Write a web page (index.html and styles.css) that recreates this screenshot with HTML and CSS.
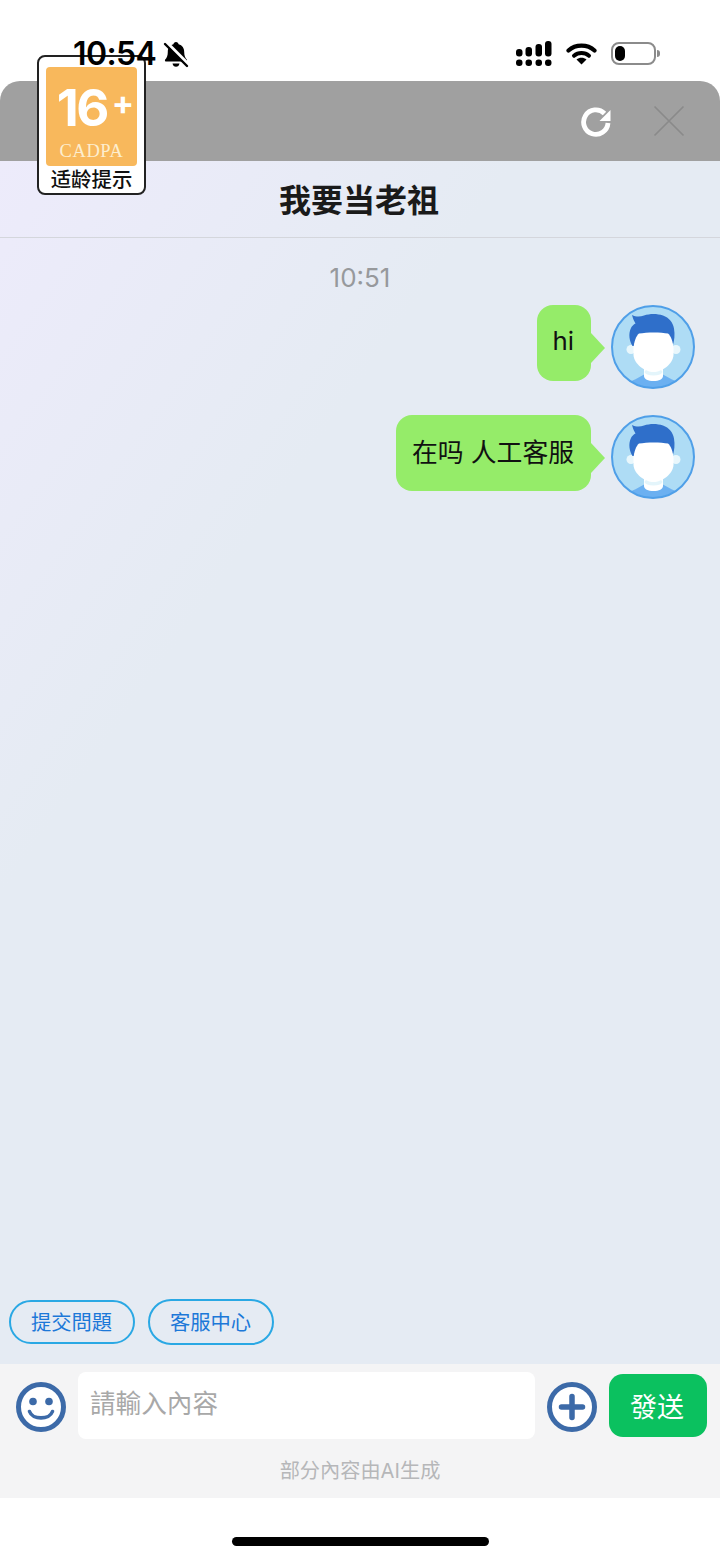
FILE: index.html
```html
<!DOCTYPE html>
<html lang="zh">
<head>
<meta charset="utf-8">
<title>我要当老祖</title>
<link rel="stylesheet" href="styles.css">
</head>
<body>
<div class="page">
  <div class="status">
    <div class="status-left">
      <span class="clock">10:54</span>
      <svg class="bell" viewBox="0 0 26 27" width="26" height="27">
        <path d="M13 1c1.500 0 2.400 1 2.600 2.300 3.800 1 5.600 4 5.600 7.700 0 4 1 5.800 2.600 7.500.7.800.2 2.100-1 2.100H3.200c-1.200 0-1.700-1.300-1-2.100 1.600-1.700 2.600-3.500 2.600-7.500 0-3.700 1.800-6.700 5.600-7.700C10.600 2 11.500 1 13 1z" fill="#000"/>
        <path d="M9.500 22.500h7c-.3 2-1.700 3.300-3.500 3.300s-3.200-1.300-3.500-3.300z" fill="#000"/>
        <path d="M3.500 1.500l22 22" stroke="#fff" stroke-width="3.600"/>
        <path d="M2 3l22 22" stroke="#000" stroke-width="2.400" stroke-linecap="round"/>
      </svg>
    </div>
    <div class="status-right">
      <svg viewBox="0 0 37 27" width="37" height="27" fill="#000">
        <rect x="1" y="9" width="6.500" height="7.500" rx="3"/>
        <rect x="10.500" y="7" width="6.500" height="9.500" rx="3"/>
        <rect x="20.500" y="4" width="6.500" height="12.500" rx="3"/>
        <rect x="30" y="1" width="6.500" height="15.500" rx="3"/>
        <rect x="1" y="19.500" width="6.500" height="6.500" rx="3"/>
        <rect x="10.500" y="19.500" width="6.500" height="6.500" rx="3"/>
        <rect x="20.500" y="19.500" width="6.500" height="6.500" rx="3"/>
        <rect x="30" y="19.500" width="6.500" height="6.500" rx="3"/>
      </svg>
      <svg class="wifi" viewBox="0 0 31 23" width="31" height="23">
        <path d="M2.500 8.500C9.500 2 21.500 2 28.500 8.500" fill="none" stroke="#000" stroke-width="4.200" stroke-linecap="round"/>
        <path d="M8 13.800C12.200 10.200 18.800 10.200 23 13.800" fill="none" stroke="#000" stroke-width="4" stroke-linecap="round"/>
        <path d="M10.500 17.400c2.800-2.300 7.200-2.300 10 0L15.500 22.500z" fill="#000"/>
      </svg>
      <div class="battery"><span class="battery-level"></span></div>
    </div>
  </div>

  <div class="sheet">
    <div class="topbar">
      <svg class="refresh" viewBox="0 0 32 32" width="32" height="32">
        <path d="M24.500 8.500A12.200 12.200 0 1 0 28 18" fill="none" stroke="#fff" stroke-width="4.800"/>
        <path d="M30.500 5v11H19.500z" fill="#fff"/>
      </svg>
      <svg class="close" viewBox="0 0 32 32" width="32" height="32">
        <path d="M1.500 1.500l29 29M30.500 1.500l-29 29" stroke="#8a8a8a" stroke-width="1.700" fill="none"/>
      </svg>
    </div>

    <div class="chat">
      <div class="chat-title">我要当老祖</div>
      <div class="messages">
        <div class="time">10:51</div>
        <div class="msg">
          <div class="bubble">hi</div>
          <svg class="avatar" viewBox="0 0 84 84" width="84" height="84">
            <defs><clipPath id="ac1"><circle cx="42" cy="42" r="40.500"/></clipPath></defs>
            <circle cx="42" cy="42" r="41" fill="#aedcf5"/>
            <path clip-path="url(#ac1)" d="M16 84c0-5 4-8 8-9.500l10-5.500h17l10 5.500c4 1.500 8 4.500 8 9.500z" fill="#6bb0f1"/>
            <path d="M33 56h19v15c0 3-4 5-9.500 5S33 74 33 71z" fill="#fff"/>
            <ellipse cx="42.500" cy="67" rx="9" ry="3.500" fill="#e4f5fb"/>
            <circle cx="20" cy="44.500" r="4.500" fill="#e9f7fc"/>
            <circle cx="65" cy="44.500" r="4.500" fill="#e9f7fc"/>
            <path d="M21.500 41c-3-5-4.500-12-1.500-18 1-2 2.500-3.500 4.500-4.500-1.500-2.500-2.500-5-3.500-8.500 4 2 8 2 12 .5 6-2 13-2 19 0 6 2 10 7 11 13 1 6 .5 12-1.500 18z" fill="#2f6fca"/>
            <path d="M22.500 43C23 37 25 31 28 28.500 36 27 50 27 57 28.500 60 31 62 37 62.500 43v7C62 59 51 67 42.500 67S23 59 22.500 50z" fill="#fff"/>
            <circle cx="42" cy="42" r="41" fill="none" stroke="#4f9fe8" stroke-width="2"/>
          </svg>
        </div>
        <div class="msg">
          <div class="bubble">在吗 人工客服</div>
          <svg class="avatar" viewBox="0 0 84 84" width="84" height="84">
            <defs><clipPath id="ac2"><circle cx="42" cy="42" r="40.500"/></clipPath></defs>
            <circle cx="42" cy="42" r="41" fill="#aedcf5"/>
            <path clip-path="url(#ac2)" d="M16 84c0-5 4-8 8-9.500l10-5.500h17l10 5.500c4 1.500 8 4.500 8 9.500z" fill="#6bb0f1"/>
            <path d="M33 56h19v15c0 3-4 5-9.500 5S33 74 33 71z" fill="#fff"/>
            <ellipse cx="42.500" cy="67" rx="9" ry="3.500" fill="#e4f5fb"/>
            <circle cx="20" cy="44.500" r="4.500" fill="#e9f7fc"/>
            <circle cx="65" cy="44.500" r="4.500" fill="#e9f7fc"/>
            <path d="M21.500 41c-3-5-4.500-12-1.500-18 1-2 2.500-3.500 4.500-4.500-1.500-2.500-2.500-5-3.500-8.500 4 2 8 2 12 .5 6-2 13-2 19 0 6 2 10 7 11 13 1 6 .5 12-1.500 18z" fill="#2f6fca"/>
            <path d="M22.500 43C23 37 25 31 28 28.500 36 27 50 27 57 28.500 60 31 62 37 62.500 43v7C62 59 51 67 42.500 67S23 59 22.500 50z" fill="#fff"/>
            <circle cx="42" cy="42" r="41" fill="none" stroke="#4f9fe8" stroke-width="2"/>
          </svg>
        </div>
      </div>
      <div class="chips">
        <div class="chip">提交問題</div>
        <div class="chip chip-tall">客服中心</div>
      </div>
    </div>

    <div class="composer">
      <div class="composer-row">
        <svg viewBox="0 0 50 50" width="50" height="50">
          <circle cx="25" cy="25" r="22.500" fill="#fff" stroke="#3c6aa8" stroke-width="5"/>
          <circle cx="17" cy="19.500" r="3.800" fill="#3c6aa8"/>
          <circle cx="33" cy="19.500" r="3.800" fill="#3c6aa8"/>
          <path d="M13.500 29.500c3 8.500 20 8.500 23 0" fill="none" stroke="#3c6aa8" stroke-width="3.600" stroke-linecap="round"/>
        </svg>
        <div class="input">請輸入內容</div>
        <svg viewBox="0 0 50 50" width="50" height="50">
          <circle cx="25" cy="25" r="22.500" fill="#fff" stroke="#3c6aa8" stroke-width="5"/>
          <path d="M14.500 25h21M25 14.500v21" stroke="#3c6aa8" stroke-width="5.500" stroke-linecap="round"/>
        </svg>
        <div class="send">發送</div>
      </div>
      <div class="note">部分內容由AI生成</div>
    </div>
  </div>

  <div class="home"><span class="home-bar"></span></div>

  <div class="age">
    <div class="age-box">
      <div class="age-num"><span>16</span><span class="age-plus">+</span></div>
      <div class="age-org">CADPA</div>
    </div>
    <div class="age-label">适龄提示</div>
  </div>
</div>
</body>
</html>
```
FILE: styles.css
```css
* { box-sizing: border-box; }
html, body { margin: 0; padding: 0; background: #fff; }
body { font-family: Inter, "Noto Sans CJK SC", sans-serif; }

.page {
  position: relative;
  width: 720px;
  height: 1561px;
  display: flex;
  flex-direction: column;
  overflow: hidden;
}

.status {
  height: 81px;
  flex: none;
  display: flex;
  justify-content: space-between;
  padding: 40px 64px 0 73px;
}
.status-left { display: flex; align-items: flex-start; gap: 7px; position: relative; z-index: 2; }
.clock { width: 83px; font-size: 32px; line-height: 28px; font-weight: 600; color: #000; letter-spacing: -0.6px; white-space: nowrap; }
.bell { margin-top: 1px; }
.status-right { display: flex; align-items: flex-start; gap: 14px; margin-left: auto; }
.wifi { margin-top: 2px; }
.battery {
  position: relative;
  width: 45px;
  height: 23px;
  margin-top: 2px;
  border: 2px solid #8b8b8b;
  border-radius: 8px;
  padding: 2px;
}
.battery::after {
  content: "";
  position: absolute;
  right: -6px;
  top: 6px;
  width: 3px;
  height: 7px;
  background: #8b8b8b;
  border-radius: 0 3px 3px 0;
}
.battery-level { display: block; width: 10px; height: 15px; background: #000; border-radius: 5px; }

.sheet { flex: 1; display: flex; flex-direction: column; min-height: 0; }

.topbar {
  height: 80px;
  flex: none;
  background: #a0a0a0;
  border-radius: 20px 20px 0 0;
  display: flex;
  justify-content: flex-end;
  align-items: center;
  gap: 41px;
  padding-right: 35px;
}

.chat {
  flex: 1;
  min-height: 0;
  display: flex;
  flex-direction: column;
  background: linear-gradient(125deg, #edebfb 0%, #e5ebf3 33%, #e5ebf3 100%);
}
.chat-title {
  height: 77px;
  flex: none;
  border-bottom: 1px solid #d4d6dc;
  display: flex;
  align-items: center;
  justify-content: center;
  font-size: 32px;
  font-weight: 700;
  color: #1a1a1a;
  padding: 0 2px 3px 0;
}
.messages { flex: 1; padding: 0 25px 0 0; }
.time {
  height: 67px;
  padding: 22px 0 0 25px;
  text-align: center;
  font-size: 26px;
  line-height: 36px;
  color: #97999c;
}
.msg { display: flex; justify-content: flex-end; align-items: flex-start; gap: 20px; margin-bottom: 26px; }
.bubble {
  position: relative;
  height: 76px;
  padding: 0 17px 6px 15.500px;
  display: flex;
  align-items: center;
  background: #95ec69;
  border-radius: 16px;
  font-size: 25.8px;
  color: #111;
  white-space: nowrap;
}
.bubble::after {
  content: "";
  position: absolute;
  right: -14px;
  top: 28px;
  border-left: 14px solid #95ec69;
  border-top: 15px solid transparent;
  border-bottom: 15px solid transparent;
}

.chips { display: flex; gap: 13px; align-items: center; padding: 0 0 19px 9px; height: 65px; flex: none; }
.chip {
  width: 126px;
  height: 44px;
  border: 2px solid #2aa8e4;
  border-radius: 22px;
  display: flex;
  align-items: center;
  justify-content: center;
  padding: 0 1px 2px 0;
  font-family: "Noto Sans CJK TC", sans-serif;
  font-size: 20.300px;
  color: #1c78d8;
}
.chip-tall { height: 46px; border-radius: 23px; }

.composer { height: 134px; flex: none; background: #f4f4f5; padding: 8px 13px 0 16px; }
.composer-row { display: flex; align-items: flex-start; }
.composer-row > svg { margin-top: 10px; flex: none; }
.input {
  width: 457px;
  height: 67px;
  margin: 0 12px;
  background: #fff;
  border-radius: 8px;
  padding: 10px 12px 0;
  font-family: "Noto Sans CJK TC", sans-serif;
  font-size: 25.6px;
  line-height: 40px;
  color: #a8a8a8;
}
.send {
  width: 98px;
  height: 63px;
  margin: 2px 0 0 12px;
  padding-right: 2px;
  background: #0bc15f;
  border-radius: 14px;
  display: flex;
  align-items: center;
  justify-content: center;
  font-family: "Noto Sans CJK TC", sans-serif;
  font-size: 27px;
  color: #fff;
}
.note {
  margin: 17px -13px 0 -16px;
  text-align: center;
  font-family: Inter, "Noto Sans CJK TC", sans-serif;
  font-size: 20.2px;
  line-height: 30px;
  color: #b6b7b9;
}

.home { height: 63px; flex: none; background: #fff; display: flex; justify-content: center; padding-top: 39px; }
.home-bar { width: 257px; height: 9px; border-radius: 5px; background: #000; }

.age {
  position: absolute;
  left: 37px;
  top: 55px;
  width: 109px;
  height: 140px;
  background: #fff;
  border: 2px solid #222;
  border-radius: 8px;
  padding: 10px 7px 0;
  z-index: 1;
}
.age-box {
  height: 99px;
  background: #f8b85c;
  border-radius: 4px;
  color: #fff;
  text-align: center;
}
.age-num {
  display: flex;
  justify-content: center;
  align-items: flex-start;
  font-family: Inter, sans-serif;
  font-weight: 700;
  font-size: 51px;
  line-height: 60px;
  letter-spacing: -2.5px;
  padding: 11px 0 0 8px;
  height: 73px;
}
.age-plus { font-size: 33px; line-height: 50px; margin-left: 5px; letter-spacing: 0; }
.age-org {
  font-family: "Liberation Serif", serif;
  font-size: 18.5px;
  line-height: 22px;
  letter-spacing: 0.6px;
  color: #fdeecf;
}
.age-label {
  padding-top: 1px;
  text-align: center;
  font-size: 20.4px;
  line-height: 26px;
  font-weight: 500;
  color: #111;
  white-space: nowrap;
}
```
